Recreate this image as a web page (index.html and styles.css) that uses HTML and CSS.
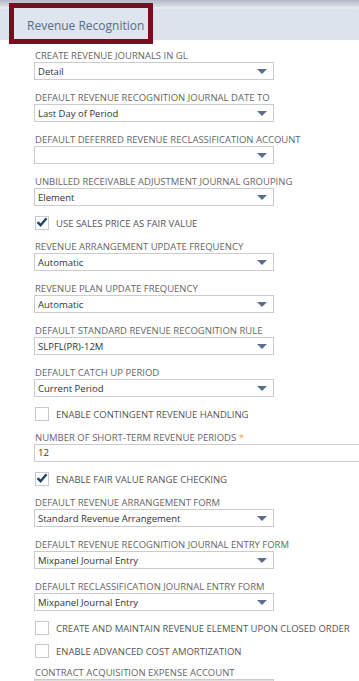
FILE: index.html
```html
<!DOCTYPE html>
<html lang="en">
<head>
    <meta charset="UTF-8">
    <title>Revenue Recognition</title>
    <link rel="stylesheet" href="styles.css">
</head>
<body>
<div class="header">
    <div class="tab">Revenue Recognition</div>
</div>

<div class="fields">
    <div class="field">
        <div class="label">Create Revenue Journals in GL</div>
        <div class="select"><span>Detail</span><i class="arrow"></i></div>
    </div>

    <div class="field">
        <div class="label">Default Revenue Recognition Journal Date To</div>
        <div class="select"><span>Last Day of Period</span><i class="arrow"></i></div>
    </div>

    <div class="field">
        <div class="label">Default Deferred Revenue Reclassification Account</div>
        <div class="select"><span></span><i class="arrow"></i></div>
    </div>

    <div class="field">
        <div class="label">Unbilled Receivable Adjustment Journal Grouping</div>
        <div class="select"><span>Element</span><i class="arrow"></i></div>
    </div>

    <div class="check-row">
        <span class="box checked">
            <svg viewBox="0 0 14 14" width="14" height="14"><path d="M2.5 7.2 L5.6 10.2 L11.5 3.2" fill="none" stroke="#22436f" stroke-width="2.4"/></svg>
        </span>
        <span class="check-text">Use Sales Price as Fair Value</span>
    </div>

    <div class="field">
        <div class="label">Revenue Arrangement Update Frequency</div>
        <div class="select"><span>Automatic</span><i class="arrow"></i></div>
    </div>

    <div class="field">
        <div class="label">Revenue Plan Update Frequency</div>
        <div class="select"><span>Automatic</span><i class="arrow"></i></div>
    </div>

    <div class="field">
        <div class="label">Default Standard Revenue Recognition Rule</div>
        <div class="select"><span>SLPFL(PR)-12M</span><i class="arrow"></i></div>
    </div>

    <div class="field">
        <div class="label">Default Catch Up Period</div>
        <div class="select"><span>Current Period</span><i class="arrow"></i></div>
    </div>

    <div class="check-row">
        <span class="box"></span>
        <span class="check-text">Enable Contingent Revenue Handling</span>
    </div>

    <div class="field">
        <div class="label">Number of Short-Term Revenue Periods <span class="required">*</span></div>
        <div class="text-input">12</div>
    </div>

    <div class="check-row">
        <span class="box checked">
            <svg viewBox="0 0 14 14" width="14" height="14"><path d="M2.5 7.2 L5.6 10.2 L11.5 3.2" fill="none" stroke="#22436f" stroke-width="2.4"/></svg>
        </span>
        <span class="check-text">Enable Fair Value Range Checking</span>
    </div>

    <div class="field">
        <div class="label">Default Revenue Arrangement Form</div>
        <div class="select"><span>Standard Revenue Arrangement</span><i class="arrow"></i></div>
    </div>

    <div class="field">
        <div class="label">Default Revenue Recognition Journal Entry Form</div>
        <div class="select"><span>Mixpanel Journal Entry</span><i class="arrow"></i></div>
    </div>

    <div class="field">
        <div class="label">Default Reclassification Journal Entry Form</div>
        <div class="select"><span>Mixpanel Journal Entry</span><i class="arrow"></i></div>
    </div>

    <div class="check-row">
        <span class="box"></span>
        <span class="check-text">Create and Maintain Revenue Element upon Closed Order</span>
    </div>

    <div class="check-row">
        <span class="box"></span>
        <span class="check-text">Enable Advanced Cost Amortization</span>
    </div>

    <div class="field">
        <div class="label">Contract Acquisition Expense Account</div>
        <div class="select disabled"><span></span><i class="arrow"></i></div>
    </div>
</div>
</body>
</html>
```

FILE: styles.css
```css
html, body {
    overflow: hidden;
}

body {
    margin: 0;
    padding: 0;
    background: #fff;
    font-family: "Open Sans", "Liberation Sans", sans-serif;
    color: #333;
}

.header {
    height: 49px;
    padding: 3px 0 0 9px;
    box-sizing: border-box;
    background: linear-gradient(to bottom, #b4b9c5 0, #d4d8e0 6px, #eceef3 8px, #dde3ec 9px, #dde3ec 40px, #fff 40px);
}

.tab {
    width: 144px;
    height: 41px;
    box-sizing: border-box;
    border: 5px solid #7c0b1f;
    background: #dfe5ee;
    color: #5b6b82;
    font-size: 12px;
    line-height: 31px;
    padding: 2px 0 0 13px;
    white-space: nowrap;
}

.fields {
    padding-left: 34px;
}

.field {
    margin-bottom: 11px;
}

.label {
    font-size: 9.5px;
    line-height: 13px;
    color: #666;
    text-transform: uppercase;
    padding-left: 1px;
    white-space: nowrap;
}

.required {
    color: #e2a032;
}

.select {
    width: 240px;
    height: 18px;
    box-sizing: border-box;
    border: 1px solid #ccc;
    background: #fff;
    display: flex;
    align-items: center;
    justify-content: space-between;
    padding: 0 6px 0 3px;
    font-size: 9.5px;
    color: #333;
}

.select.disabled {
    background: linear-gradient(to bottom, #dedede, #ececec);
}

.arrow {
    width: 0;
    height: 0;
    border-left: 5px solid transparent;
    border-right: 5px solid transparent;
    border-top: 5px solid #5a6d8c;
}

.text-input {
    width: 340px;
    height: 18px;
    box-sizing: border-box;
    border: 1px solid #ccc;
    padding-left: 3px;
    font-size: 9.5px;
    line-height: 16px;
    color: #333;
}

.check-row {
    height: 20px;
    margin: -4px 0 7px 1px;
    display: flex;
    align-items: center;
    gap: 7px;
}

.check-row + .check-row {
    margin-top: -4px;
    margin-bottom: 5px;
}

.box {
    width: 14px;
    height: 14px;
    box-sizing: border-box;
    border: 1px solid #c9c9c9;
    background: #fff;
    position: relative;
}

.box svg {
    position: absolute;
    left: -1px;
    top: -2px;
}

.check-text {
    font-size: 9.5px;
    color: #555;
    text-transform: uppercase;
    white-space: nowrap;
}
```
